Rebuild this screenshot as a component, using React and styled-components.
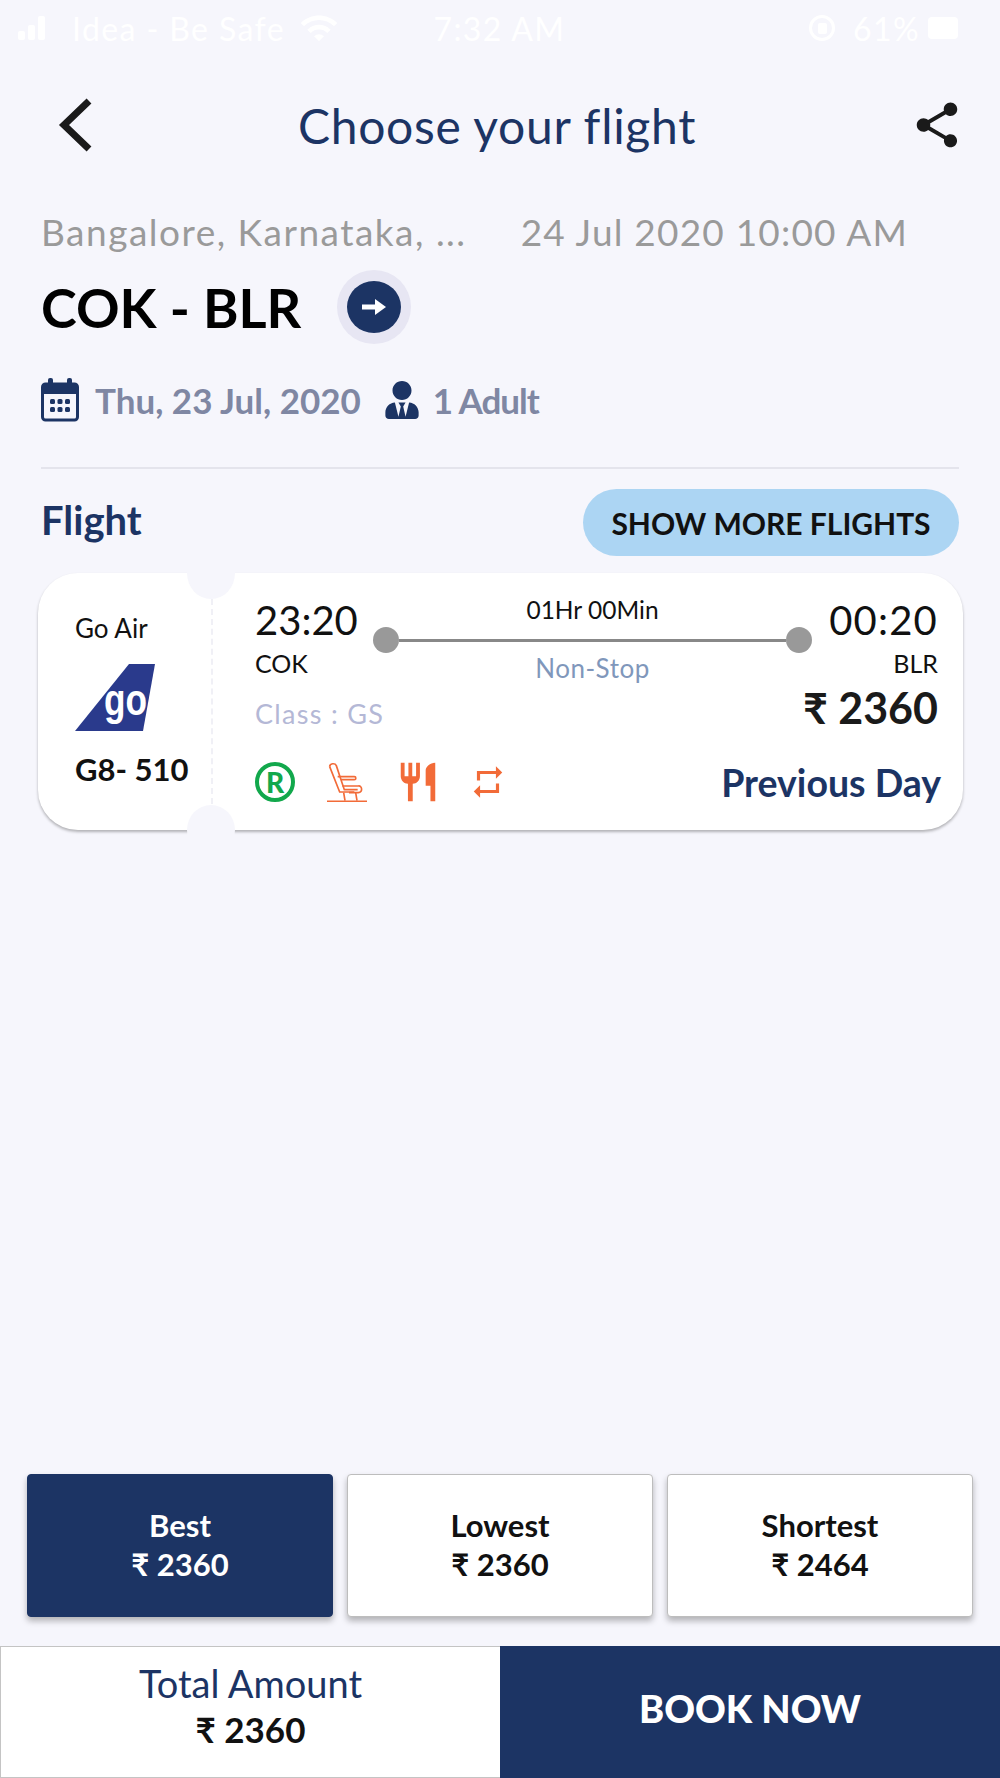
import React from 'react';
import styled, { createGlobalStyle } from 'styled-components';
import { MdShare, MdRestaurant, MdRepeat, MdWifi } from 'react-icons/md';
import { FaUserTie } from 'react-icons/fa';

const NAVY = '#1c3464';
const PAGE = '#f6f6fc';
const FONT = 'Lato, "Noto Sans", "DejaVu Sans", sans-serif';

const GlobalStyle = createGlobalStyle`
    html, body {
        margin: 0;
        padding: 0;
        background: ${PAGE};
    }
    * {
        box-sizing: border-box;
    }
`

const Page = styled.div`
    display: flex;
    flex-direction: column;
    width: 1000px;
    height: 1778px;
    background: ${PAGE};
    font-family: ${FONT};
    overflow: hidden;
`

const StatusBar = styled.div`
    display: grid;
    grid-template-columns: 1fr auto 1fr;
    align-items: center;
    height: 56px;
    padding: 0 42px 0 18px;
    color: #ffffff;
    font-size: 32px;
    letter-spacing: 1.4px;
`

const StatusSide = styled.div`
    display: flex;
    align-items: center;
    justify-content: ${props => props.$end ? 'flex-end' : 'flex-start'};
    gap: ${props => props.$gap || 8}px;
`

const Clock = styled.span`
    margin-left: 23px;
`

const Bars = styled.div`
    display: flex;
    align-items: flex-end;
    gap: 3px;
    height: 24px;
    margin-right: 13px;
`

const Bar = styled.span`
    width: 7px;
    height: ${props => props.$h}px;
    border-radius: 2px;
    background: #ffffff;
`

const LockRing = styled.span`
    display: flex;
    align-items: center;
    justify-content: center;
    width: 26px;
    height: 26px;
    margin-right: 10px;
    border: 3px solid #ffffff;
    border-radius: 50%;
`

const LockBody = styled.span`
    width: 9px;
    height: 11px;
    border-radius: 2px;
    background: #ffffff;
`

const Battery = styled.span`
    width: 30px;
    height: 22px;
    border-radius: 4px;
    background: #ffffff;
`

const Header = styled.header`
    display: flex;
    align-items: center;
    justify-content: space-between;
    height: 138px;
    padding: 0 36px 0 58px;
`

const Title = styled.h1`
    margin: 0 10px 0 0;
    font-size: 48px;
    font-weight: 400;
    color: ${NAVY};
    letter-spacing: 0.7px;
`

const Summary = styled.section`
    display: flex;
    flex-direction: column;
    padding: 0 41px;
`

const PlaceRow = styled.div`
    display: flex;
    justify-content: space-between;
    padding: 16px 51px 0 0;
    color: #9a9a9a;
    font-size: 37px;
    line-height: 44px;
    letter-spacing: 1.2px;
`

const PlaceName = styled.span`
    letter-spacing: 1.5px;
`

const RouteRow = styled.div`
    display: flex;
    align-items: center;
    gap: 36px;
    margin-top: 16px;
`

const Route = styled.div`
    font-size: 54px;
    font-weight: 700;
    color: #000000;
`

const ArrowRing = styled.div`
    display: flex;
    align-items: center;
    justify-content: center;
    width: 74px;
    height: 74px;
    border-radius: 50%;
    background: #e7e6f3;
`

const ArrowDot = styled.div`
    display: flex;
    align-items: center;
    justify-content: center;
    width: 54px;
    height: 52px;
    border-radius: 50%;
    background: ${NAVY};
`

const MetaRow = styled.div`
    display: flex;
    align-items: center;
    margin-top: 34px;
    height: 44px;
    color: #7f87a3;
    font-size: 35px;
    font-weight: 700;
`

const MetaText = styled.span`
    margin: 0 ${props => props.$tight ? 0 : 22}px 0 ${props => props.$tight ? 12 : 16}px;
    letter-spacing: ${props => props.$tight ? -1 : 0}px;
`

const Divider = styled.div`
    height: 2px;
    margin-top: 45px;
    background: #e4e4ec;
`

const FlightHead = styled.div`
    display: flex;
    align-items: center;
    justify-content: space-between;
    margin-top: 20px;
`

const SectionName = styled.h2`
    margin: 0 0 6px;
    font-size: 40px;
    font-weight: 700;
    color: ${NAVY};
`

const MoreButton = styled.button`
    width: 376px;
    height: 67px;
    border: 0;
    border-radius: 34px;
    background: #acd5f3;
    color: #111111;
    font-family: ${FONT};
    font-size: 30px;
    font-weight: 700;
`

const Ticket = styled.article`
    position: relative;
    display: flex;
    height: 257px;
    margin: 17px 37px 0 38px;
    border-radius: 40px;
    background: #ffffff;
    box-shadow: 0 2px 3px rgba(0, 0, 0, 0.28);
`

const Notch = styled.span`
    position: absolute;
    left: 149px;
    ${props => props.$bottom ? 'bottom: -25px;' : 'top: -26px;'}
    width: 48px;
    height: ${props => props.$bottom ? 50 : 52}px;
    border-radius: 50%;
    background: ${PAGE};
`

const Airline = styled.div`
    display: flex;
    flex-direction: column;
    align-items: flex-start;
    width: 175px;
    margin: 26px 0;
    padding: 14px 0 0 37px;
    border-right: 2px dashed #f0f0f6;
    color: #111111;
`

const AirlineName = styled.div`
    font-size: 26px;
    line-height: 30px;
`

const FlightNo = styled.div`
    margin-top: 18px;
    font-size: 31px;
    line-height: 36px;
    font-weight: 700;
`

const Logo = styled.div`
    position: relative;
    width: 80px;
    height: 70px;
    margin-top: 20px;
`

const LogoTail = styled.svg`
    display: block;
    width: 80px;
    height: 70px;
`

const LogoMark = styled.span`
    position: absolute;
    left: 29px;
    top: 12px;
    color: #ffffff;
    font-family: "Liberation Sans", sans-serif;
    font-size: 44px;
    line-height: 50px;
    font-weight: 700;
    transform: scaleX(0.8);
    transform-origin: left center;
`

const Details = styled.div`
    flex: 1;
    display: flex;
    flex-direction: column;
    padding: 23px 25px 0 42px;
`

const TimeRow = styled.div`
    display: flex;
    align-items: flex-start;
    justify-content: space-between;
`

const Endpoint = styled.div`
    display: flex;
    flex-direction: column;
    align-items: ${props => props.$end ? 'flex-end' : 'flex-start'};
    color: #111111;
`

const Time = styled.div`
    font-size: 40px;
    line-height: 48px;
    letter-spacing: ${props => props.$wide ? 1.2 : 0}px;
`

const Code = styled.div`
    margin-top: 4px;
    font-size: 25px;
    line-height: 30px;
`

const Track = styled.div`
    flex: 1;
    display: flex;
    flex-direction: column;
    align-items: center;
    padding: 0 17px 0 15px;
`

const Duration = styled.div`
    font-size: 24.5px;
    line-height: 28px;
    color: #111111;
`

const Line = styled.div`
    display: flex;
    align-items: center;
    align-self: stretch;
    height: 26px;
    margin-top: 3px;
`

const Dot = styled.span`
    width: 26px;
    height: 26px;
    border-radius: 50%;
    background: #999999;
`

const Rail = styled.span`
    flex: 1;
    height: 3px;
    background: #888888;
`

const Stops = styled.div`
    font-size: 26px;
    line-height: 30px;
    color: #8097bb;
    letter-spacing: 0.5px;
`

const FareRow = styled.div`
    display: flex;
    align-items: center;
    justify-content: space-between;
    height: 50px;
    margin-top: 5px;
`

const ClassName = styled.div`
    font-size: 27px;
    color: #b4b8d6;
    letter-spacing: 1.3px;
`

const Price = styled.div`
    margin-top: -11px;
    font-size: 43px;
    font-weight: 700;
    color: #1a1a1a;
`

const ServiceRow = styled.div`
    display: flex;
    align-items: center;
    justify-content: space-between;
    height: 46px;
    margin-top: 21px;
`

const Services = styled.div`
    display: flex;
    align-items: center;
    color: #f26b38;
`

const Refund = styled.span`
    display: flex;
    align-items: center;
    justify-content: center;
    width: 40px;
    height: 40px;
    margin-right: 32px;
    border: 4px solid #12a84c;
    border-radius: 50%;
    color: #12a84c;
    font-size: 28px;
    font-weight: 900;
`

const SeatIcon = styled.svg`
    width: 40px;
    height: 40px;
    margin-right: 28px;
`

const Meal = styled(MdRestaurant)`
    width: 46px;
    height: 46px;
    margin-right: 28px;
`

const Repeat = styled(MdRepeat)`
    width: 38px;
    height: 38px;
`

const DayNote = styled.div`
    margin-right: -3px;
    font-size: 37.5px;
    font-weight: 700;
    color: ${NAVY};
`

const Spacer = styled.div`
    flex: 1;
`

const SortRow = styled.div`
    display: grid;
    grid-template-columns: repeat(3, 306px);
    gap: 14px;
    padding: 0 27px;
`

const SortCard = styled.button`
    display: flex;
    flex-direction: column;
    align-items: center;
    justify-content: center;
    gap: 4px;
    height: 143px;
    padding: 0 0 2px;
    border: 1px solid ${props => props.$active ? NAVY : '#bdbdbd'};
    border-radius: 4px;
    background: ${props => props.$active ? NAVY : '#ffffff'};
    color: ${props => props.$active ? '#ffffff' : '#111111'};
    box-shadow: 0 4px 6px rgba(0, 0, 0, 0.28);
    font-family: ${FONT};
    font-size: 31px;
    line-height: 35px;
    font-weight: 700;
`

const Footer = styled.footer`
    display: grid;
    grid-template-columns: 1fr 1fr;
    height: 132px;
    margin-top: 29px;
`

const Total = styled.div`
    display: flex;
    flex-direction: column;
    align-items: center;
    justify-content: center;
    gap: 4px;
    padding-bottom: 12px;
    border: 1px solid #c4c4c4;
    border-right: 0;
    background: #ffffff;
`

const TotalLabel = styled.div`
    font-size: 38px;
    line-height: 42px;
    color: ${NAVY};
`

const TotalPrice = styled.div`
    font-size: 35px;
    line-height: 42px;
    font-weight: 700;
    color: #111111;
`

const BookButton = styled.button`
    padding: 0 0 8px;
    border: 0;
    background: ${NAVY};
    color: #ffffff;
    font-family: ${FONT};
    font-size: 38px;
    font-weight: 900;
`

const sorts = [
    { label: 'Best', price: '₹ 2360', active: true },
    { label: 'Lowest', price: '₹ 2360' },
    { label: 'Shortest', price: '₹ 2464' },
];

function App() {
    return (
        <Page>
            <GlobalStyle />
            <StatusBar>
                <StatusSide $gap={14}>
                    <Bars>
                        <Bar $h={9} />
                        <Bar $h={15} />
                        <Bar $h={24} />
                    </Bars>
                    <span>Idea - Be Safe</span>
                    <MdWifi size={40} />
                </StatusSide>
                <Clock>7:32 AM</Clock>
                <StatusSide $end>
                    <LockRing>
                        <LockBody />
                    </LockRing>
                    <span>61%</span>
                    <Battery />
                </StatusSide>
            </StatusBar>

            <Header>
                <svg width="36" height="54" viewBox="0 0 36 54">
                    <polyline points="31,3 6,27 31,51" fill="none" stroke="#1a1a1a" strokeWidth="7" />
                </svg>
                <Title>Choose your flight</Title>
                <MdShare size={54} color="#1a1a1a" />
            </Header>

            <Summary>
                <PlaceRow>
                    <PlaceName>Bangalore, Karnataka, ...</PlaceName>
                    <span>24 Jul 2020 10:00 AM</span>
                </PlaceRow>
                <RouteRow>
                    <Route>COK - BLR</Route>
                    <ArrowRing>
                        <ArrowDot>
                            <svg width="26" height="20" viewBox="0 0 26 20">
                                <path d="M1 7.5h13V2l11 8-11 8v-5.5H1z" fill="#ffffff" />
                            </svg>
                        </ArrowDot>
                    </ArrowRing>
                </RouteRow>
                <MetaRow>
                    <svg width="38" height="44" viewBox="0 0 38 44">
                        <rect x="1.5" y="6" width="35" height="36" rx="3" fill="none" stroke={NAVY} strokeWidth="3" />
                        <rect x="1.5" y="6" width="35" height="10" fill={NAVY} />
                        <rect x="7" y="0" width="5" height="10" rx="2" fill={NAVY} />
                        <rect x="26" y="0" width="5" height="10" rx="2" fill={NAVY} />
                        <g fill={NAVY}>
                            <rect x="9" y="21" width="5" height="5" rx="1.5" />
                            <rect x="16.5" y="21" width="5" height="5" rx="1.5" />
                            <rect x="24" y="21" width="5" height="5" rx="1.5" />
                            <rect x="9" y="29" width="5" height="5" rx="1.5" />
                            <rect x="16.5" y="29" width="5" height="5" rx="1.5" />
                            <rect x="24" y="29" width="5" height="5" rx="1.5" />
                        </g>
                    </svg>
                    <MetaText>Thu, 23 Jul, 2020</MetaText>
                    <FaUserTie size={38} color={NAVY} />
                    <MetaText $tight>1 Adult</MetaText>
                </MetaRow>
                <Divider />
                <FlightHead>
                    <SectionName>Flight</SectionName>
                    <MoreButton>SHOW MORE FLIGHTS</MoreButton>
                </FlightHead>
            </Summary>

            <Ticket>
                <Notch />
                <Notch $bottom />
                <Airline>
                    <AirlineName>Go Air</AirlineName>
                    <Logo>
                        <LogoTail viewBox="0 0 80 70">
                            <polygon points="54,1 80,1 68,68 0,68" fill="#2a3a8c" />
                        </LogoTail>
                        <LogoMark>go</LogoMark>
                    </Logo>
                    <FlightNo>G8- 510</FlightNo>
                </Airline>
                <Details>
                    <TimeRow>
                        <Endpoint>
                            <Time>23:20</Time>
                            <Code>COK</Code>
                        </Endpoint>
                        <Track>
                            <Duration>01Hr 00Min</Duration>
                            <Line>
                                <Dot />
                                <Rail />
                                <Dot />
                            </Line>
                            <Stops>Non-Stop</Stops>
                        </Track>
                        <Endpoint $end>
                            <Time $wide>00:20</Time>
                            <Code>BLR</Code>
                        </Endpoint>
                    </TimeRow>
                    <FareRow>
                        <ClassName>Class : GS</ClassName>
                        <Price>₹ 2360</Price>
                    </FareRow>
                    <ServiceRow>
                        <Services>
                            <Refund>R</Refund>
                            <SeatIcon viewBox="0 0 120 120" fill="none" stroke="#f26b38" strokeWidth="5">
                                <path d="M8 14c0-10 16-12 20-3l14 42 10 30h40" />
                                <path d="M8 14l30 76h44" />
                                <path d="M32 44h50c6 0 6 9 0 9H42" />
                                <path d="M46 72h48c12-2 14 20 0 20H66" />
                                <path d="M50 92l4 24M86 92l4 24" />
                                <path d="M0 118h120" />
                            </SeatIcon>
                            <Meal />
                            <Repeat />
                        </Services>
                        <DayNote>Previous Day</DayNote>
                    </ServiceRow>
                </Details>
            </Ticket>

            <Spacer />

            <SortRow>
                {sorts.map(sort => (
                    <SortCard key={sort.label} $active={sort.active}>
                        <span>{sort.label}</span>
                        <span>{sort.price}</span>
                    </SortCard>
                ))}
            </SortRow>

            <Footer>
                <Total>
                    <TotalLabel>Total Amount</TotalLabel>
                    <TotalPrice>₹ 2360</TotalPrice>
                </Total>
                <BookButton>BOOK NOW</BookButton>
            </Footer>
        </Page>
    )
}

export default App;
